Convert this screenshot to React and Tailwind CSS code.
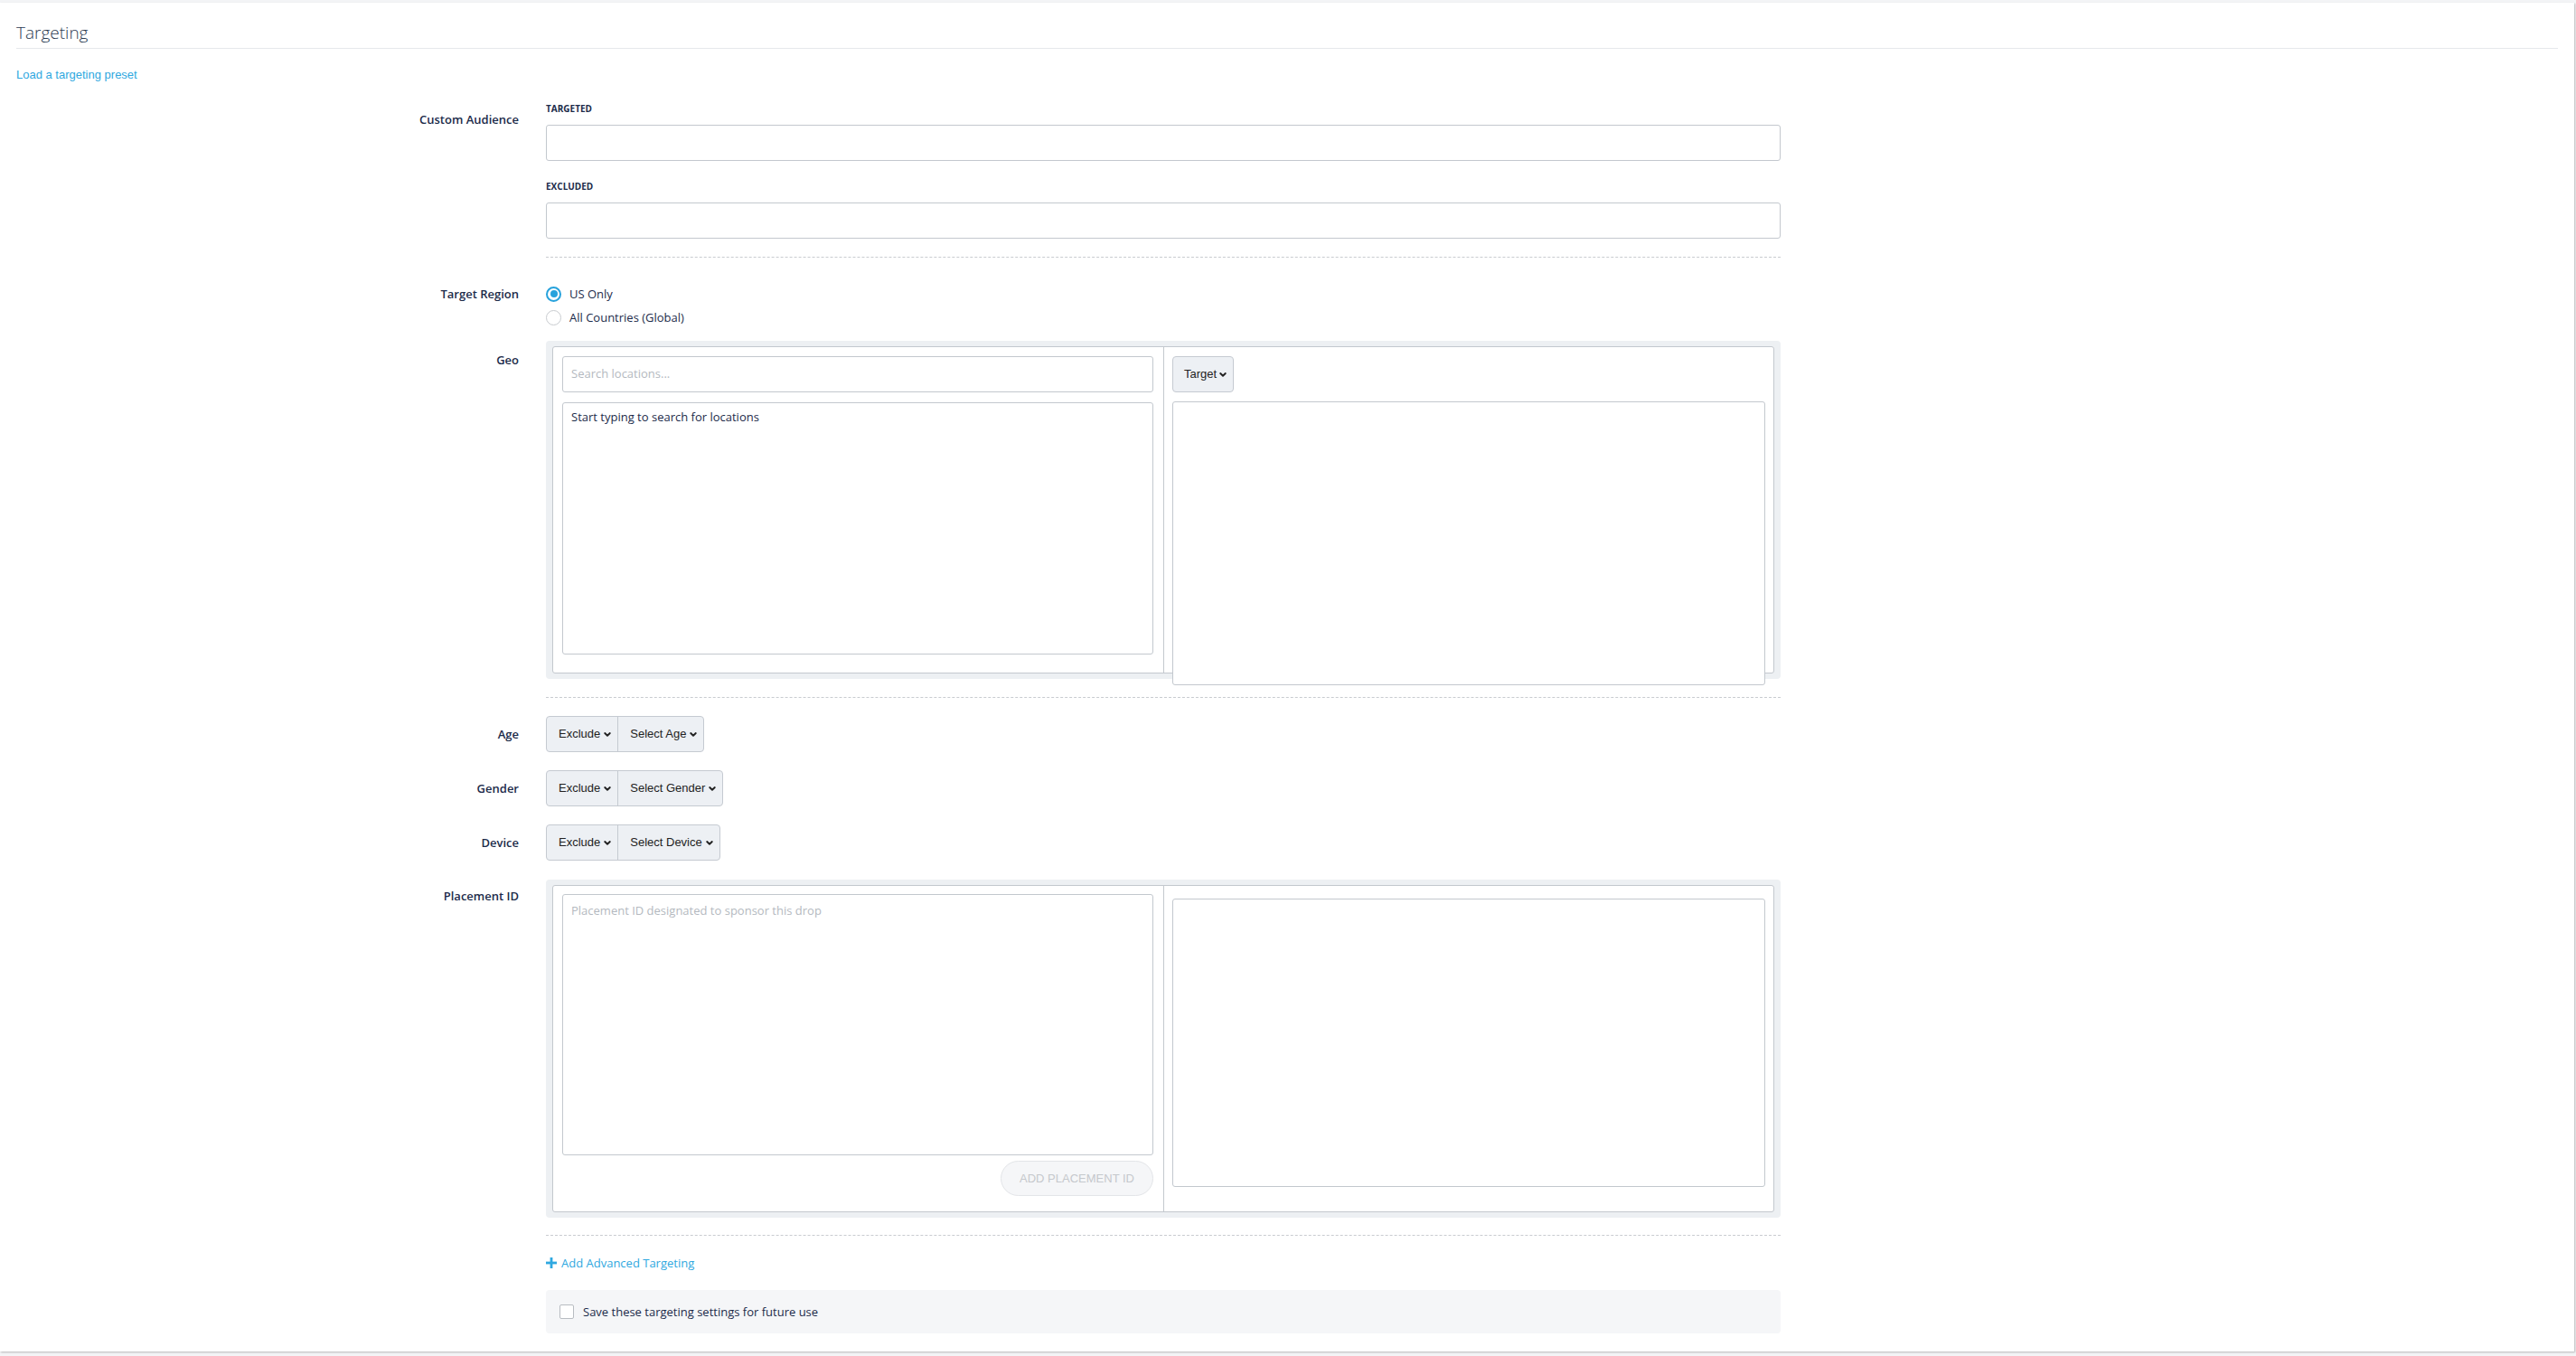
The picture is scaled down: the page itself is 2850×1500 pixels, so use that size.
import React from 'react'

// small bold chevron used on the dropdown buttons
const Chevron = () => (
    <svg viewBox="0 0 10 6" className="w-[8px] h-[5px]" fill="none" stroke="currentColor" strokeWidth="2.4" strokeLinecap="round" strokeLinejoin="round">
        <path d="M1.5 1.2 5 4.6 8.5 1.2" />
    </svg>
)

const FieldRow = ({ label, labelClass = '', className = '', children }) => (
    <div className={`grid grid-cols-[556px_1366px] gap-x-[30px] ${className}`}>
        <div className={`text-right text-[13px] leading-[18px] font-semibold text-[#1c2b4a] ${labelClass}`}>{label}</div>
        <div>{children}</div>
    </div>
)

const Divider = ({ className = '' }) => (
    <div className={`grid grid-cols-[556px_1366px] gap-x-[30px] ${className}`}>
        <div />
        <div className="border-t border-dashed border-[#c9ccd0]" />
    </div>
)

const SelectGroup = ({ label }) => (
    <div className="inline-flex h-[40px] rounded-[4px] border border-[#c5cad1] bg-[#edf0f4] font-['Liberation_Sans',Arial,sans-serif] text-[13px] text-[#222]">
        <div className="flex items-center gap-[4px] pl-[13px] pr-[7px] border-r border-[#c5cad1]">
            Exclude <Chevron />
        </div>
        <div className="flex items-center gap-[4px] pl-[13px] pr-[7px]">
            {label} <Chevron />
        </div>
    </div>
)

const TextBox = ({ className = '', children }) => (
    <div className={`rounded-[3px] border border-[#c3c8ce] bg-white ${className}`}>{children}</div>
)

export default function App() {
    return (
        <div className="h-[1500px] w-full bg-[#f3f4f6] pt-[3px] pr-[2px] font-['Open_Sans',sans-serif] text-[#1c2b4a]">
            <div className="h-[1492px] bg-white px-[18px] shadow-[1px_1px_2px_rgba(0,0,0,0.25)]">
                {/* Header */}
                <div className="pt-[20px] pb-[4px] border-b border-[#e6e8eb]">
                    <h1 className="text-[19px] leading-[26px] font-light text-[#2b3a52]">Targeting</h1>
                </div>
                <div className="mt-[21px] font-['Liberation_Sans',Arial,sans-serif] text-[13px] leading-[15px] text-[#2fa8e0]">
                    Load a targeting preset
                </div>

                {/* Custom audience */}
                <FieldRow label="Custom Audience" labelClass="pt-[10px]" className="mt-[23px]">
                    <div className="text-[10px] leading-[14px] font-bold text-[#1c2b4a]">TARGETED</div>
                    <TextBox className="mt-[11px] h-[40px]" />
                    <div className="mt-[21px] text-[10px] leading-[14px] font-bold text-[#1c2b4a]">EXCLUDED</div>
                    <TextBox className="mt-[11px] h-[40px]" />
                </FieldRow>
                <Divider className="mt-[20px]" />

                {/* Region */}
                <FieldRow label="Target Region" className="mt-[31px]">
                    <div className="flex flex-col gap-[8px] text-[13px] leading-[18px]">
                        <label className="flex items-center gap-[9px]">
                            <span className="flex items-center justify-center w-[17px] h-[17px] rounded-full border-[2px] border-[#27a2dc] bg-white">
                                <span className="w-[8px] h-[8px] rounded-full bg-[#27a2dc]" />
                            </span>
                            US Only
                        </label>
                        <label className="flex items-center gap-[9px]">
                            <span className="w-[17px] h-[17px] rounded-full border border-[#c8cbcf] bg-white" />
                            All Countries (Global)
                        </label>
                    </div>
                </FieldRow>

                <FieldRow label="Geo" labelClass="pt-[12px]" className="mt-[17px]">
                    <div className="rounded-[4px] bg-[#edf0f3] px-[7px] py-[6px]">
                        <div className="flex h-[362px] rounded-[3px] border border-[#c3c8ce] bg-white">
                            <div className="w-[675px] pl-[10px] pr-[11px] pt-[10px]">
                                <TextBox className="h-[40px] flex items-center px-[9px] text-[13px] text-[#b4b9c0]">
                                    Search locations...
                                </TextBox>
                                <TextBox className="mt-[11px] h-[279px] px-[9px] pt-[6px] text-[13px] leading-[18px]">
                                    Start typing to search for locations
                                </TextBox>
                            </div>
                            <div className="flex-1 border-l border-[#c3c8ce] pl-[9px] pr-[9px] pt-[10px]">
                                <div className="inline-flex h-[40px] items-center gap-[3px] rounded-[4px] border border-[#c5cad1] bg-[#edf0f4] pl-[12px] pr-[7px] font-['Liberation_Sans',Arial,sans-serif] text-[13px] text-[#222]">
                                    Target <Chevron />
                                </div>
                                <TextBox className="mt-[10px] h-[314px] relative" />
                            </div>
                        </div>
                    </div>
                </FieldRow>
                <Divider className="mt-[20px]" />

                {/* Demographics */}
                <FieldRow label="Age" labelClass="pt-[11px]" className="mt-[20px]">
                    <SelectGroup label="Select Age" />
                </FieldRow>
                <FieldRow label="Gender" labelClass="pt-[11px]" className="mt-[20px]">
                    <SelectGroup label="Select Gender" />
                </FieldRow>
                <FieldRow label="Device" labelClass="pt-[11px]" className="mt-[20px]">
                    <SelectGroup label="Select Device" />
                </FieldRow>

                <FieldRow label="Placement ID" labelClass="pt-[9px]" className="mt-[21px]">
                    <div className="rounded-[4px] bg-[#edf0f3] px-[7px] py-[6px]">
                        <div className="flex h-[362px] rounded-[3px] border border-[#c3c8ce] bg-white">
                            <div className="w-[675px] pl-[10px] pr-[11px] pt-[9px]">
                                <TextBox className="h-[289px] px-[9px] pt-[8px] text-[13px] leading-[18px] text-[#b4b9c0]">
                                    Placement ID designated to sponsor this drop
                                </TextBox>
                                <div className="mt-[6px] flex justify-end">
                                    <div className="flex h-[39px] w-[169px] items-center justify-center rounded-full border border-[#e3e5e8] bg-[#f5f6f8] font-['Liberation_Sans',Arial,sans-serif] text-[13px] text-[#c5c8cc]">
                                        ADD PLACEMENT ID
                                    </div>
                                </div>
                            </div>
                            <div className="flex-1 border-l border-[#c3c8ce] pl-[9px] pr-[9px] pt-[14px]">
                                <TextBox className="h-[319px]" />
                            </div>
                        </div>
                    </div>
                </FieldRow>
                <Divider className="mt-[19px]" />

                {/* Footer actions */}
                <FieldRow label="" className="mt-[21px]">
                    <div className="flex items-center gap-[5px] text-[13px] leading-[18px] text-[#2fa8e0]">
                        <svg viewBox="0 0 12 12" className="w-[12px] h-[12px]" fill="currentColor">
                            <rect x="4.6" y="0" width="2.8" height="12" />
                            <rect x="0" y="4.6" width="12" height="2.8" />
                        </svg>
                        Add Advanced Targeting
                    </div>
                </FieldRow>
                <FieldRow label="" className="mt-[21px]">
                    <div className="flex h-[48px] items-center gap-[10px] rounded-[4px] bg-[#f5f6f8] pl-[15px] text-[13px] leading-[18px]">
                        <span className="w-[16px] h-[16px] rounded-[2px] border border-[#b8bcc2] bg-white" />
                        Save these targeting settings for future use
                    </div>
                </FieldRow>
            </div>
        </div>
    )
}
